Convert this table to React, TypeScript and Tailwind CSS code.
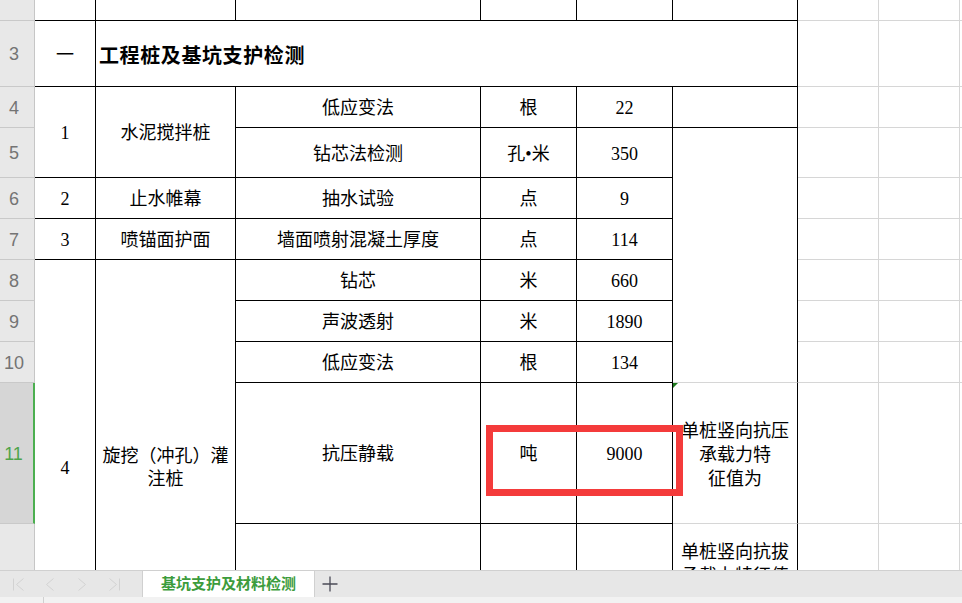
import React from "react";

// spreadsheet cell styles: every cell draws its own right + bottom edge
const cell = "p-0 px-1 pt-[3px] border-r border-b border-black text-center align-middle";
const grid = "p-0 border-r border-b border-[#d6d6d6]";

const COLS = [35, 61, 140, 245, 96, 96, 125, 81, 81, 81];

function RowHead({ n, active }: { n?: number; active?: boolean }) {
  return (
    <td
      className={`p-0 pr-[6px] pt-[2px] text-center align-middle font-['Liberation_Sans',sans-serif] text-[18px] border-b border-b-[#c9c9c9] ${
        active
          ? "bg-[#d6d6d6] text-[#4ea44a] border-r-2 border-r-[#4caf50]"
          : "bg-[#e8e8e8] text-[#747474] border-r border-r-[#c6c6c6]"
      }`}
    >
      {n}
    </td>
  );
}

function Blanks() {
  return (
    <>
      <td className={grid} />
      <td className={grid} />
      <td className={grid} />
    </>
  );
}

function SheetTabs() {
  return (
    <>
      <div className="h-[27px] flex bg-[#e7e7e7] border-t border-[#d0d0d0]">
        <div className="w-[142px] flex items-center pl-[2px]">
          <button className="w-[32px] flex justify-center">
            <svg width="13" height="13" viewBox="0 0 13 13" fill="none" stroke="#d2d2d2" strokeWidth="1">
              <path d="M1.5 0.5v12M11.5 0.5L4.5 6.5l7 6" />
            </svg>
          </button>
          <button className="w-[32px] flex justify-center">
            <svg width="12" height="13" viewBox="0 0 12 13" fill="none" stroke="#d2d2d2" strokeWidth="1">
              <path d="M9.5 0.5L2.5 6.5l7 6" />
            </svg>
          </button>
          <button className="w-[32px] flex justify-center">
            <svg width="12" height="13" viewBox="0 0 12 13" fill="none" stroke="#d2d2d2" strokeWidth="1">
              <path d="M2.5 0.5l7 6-7 6" />
            </svg>
          </button>
          <button className="w-[32px] flex justify-center">
            <svg width="13" height="13" viewBox="0 0 13 13" fill="none" stroke="#d2d2d2" strokeWidth="1">
              <path d="M1.5 0.5l7 6-7 6M11.5 0.5v12" />
            </svg>
          </button>
        </div>
        <div className="w-[173px] bg-white border-x border-[#d0d0d0] flex items-center justify-center text-[15px] font-bold text-[#3c9c3c]">
          基坑支护及材料检测
        </div>
        <button className="ml-[7px] flex items-center">
          <svg width="16" height="16" viewBox="0 0 16 16" fill="none" stroke="#4b4b57" strokeWidth="1.3">
            <path d="M8 0.5v15M0.5 8h15" />
          </svg>
        </button>
      </div>
      <div className="h-[6px] bg-[#f2f2f2] flex">
        <div className="w-[44px] border-r border-[#d0d0d0]" />
      </div>
    </>
  );
}

export default function App() {
  return (
    <div className="relative w-[962px] h-[603px] flex flex-col bg-white overflow-hidden font-['Liberation_Serif','Noto_Sans_CJK_SC',serif] text-black">
      <div className="h-[570px] overflow-hidden">
        <table className="table-fixed border-separate border-spacing-0 w-[1041px] text-[18px] leading-[23px]">
          <colgroup>
            {COLS.map((w, i) => (
              <col key={i} style={{ width: w }} />
            ))}
          </colgroup>
          <tbody>
            <tr className="h-[21px]">
              <RowHead />
              <td className={cell} />
              <td className={cell} />
              <td className={cell} />
              <td className={cell} />
              <td className={cell} />
              <td className={cell} />
              <Blanks />
            </tr>
            <tr className="h-[66px]">
              <RowHead n={3} />
              <td className={cell}>一</td>
              <td colSpan={5} className="p-0 pl-[3px] pt-[2px] border-r border-b border-black align-middle text-left font-['Noto_Sans_CJK_SC',sans-serif] font-bold text-[20px] tracking-[0.6px]">
                工程桩及基坑支护检测
              </td>
              <Blanks />
            </tr>
            <tr className="h-[41px]">
              <RowHead n={4} />
              <td rowSpan={2} className={cell}>1</td>
              <td rowSpan={2} className={cell}>水泥搅拌桩</td>
              <td className={cell}>低应变法</td>
              <td className={cell}>根</td>
              <td className={cell}>22</td>
              <td className={cell} />
              <Blanks />
            </tr>
            <tr className="h-[50px]">
              <RowHead n={5} />
              <td className={cell}>钻芯法检测</td>
              <td className={cell}>孔•米</td>
              <td className={cell}>350</td>
              <td rowSpan={6} className="p-0 border-r border-r-black border-b border-b-[#d6d6d6]" />
              <Blanks />
            </tr>
            <tr className="h-[41px]">
              <RowHead n={6} />
              <td className={cell}>2</td>
              <td className={cell}>止水帷幕</td>
              <td className={cell}>抽水试验</td>
              <td className={cell}>点</td>
              <td className={cell}>9</td>
              <Blanks />
            </tr>
            <tr className="h-[41px]">
              <RowHead n={7} />
              <td className={cell}>3</td>
              <td className={cell}>喷锚面护面</td>
              <td className={cell}>墙面喷射混凝土厚度</td>
              <td className={cell}>点</td>
              <td className={cell}>114</td>
              <Blanks />
            </tr>
            <tr className="h-[41px]">
              <RowHead n={8} />
              <td rowSpan={5} className={cell}>4</td>
              <td rowSpan={5} className={cell}>旋挖（冲孔）灌注桩</td>
              <td className={cell}>钻芯</td>
              <td className={cell}>米</td>
              <td className={cell}>660</td>
              <Blanks />
            </tr>
            <tr className="h-[41px]">
              <RowHead n={9} />
              <td className={cell}>声波透射</td>
              <td className={cell}>米</td>
              <td className={cell}>1890</td>
              <Blanks />
            </tr>
            <tr className="h-[41px]">
              <RowHead n={10} />
              <td className={cell}>低应变法</td>
              <td className={cell}>根</td>
              <td className={cell}>134</td>
              <Blanks />
            </tr>
            <tr className="h-[141px]">
              <RowHead n={11} active />
              <td className={cell}>抗压静载</td>
              <td className={cell}>吨</td>
              <td className={cell}>9000</td>
              <td className="relative p-0 pt-[3px] border-r border-r-black border-b border-b-[#d6d6d6] text-center align-middle leading-[24px]">
                {/* error indicator */}
                <span className="absolute top-0 left-0 w-0 h-0 border-t-[5px] border-r-[5px] border-t-[#1d7a1d] border-r-transparent" />
                单桩竖向抗压
                <br />
                承载力特
                <br />
                征值为
              </td>
              <Blanks />
            </tr>
            <tr className="h-[150px]">
              <RowHead />
              <td className={cell} />
              <td className={cell} />
              <td className={cell} />
              <td className="p-0 pt-[16px] border-r border-r-black border-b border-b-[#d6d6d6] text-center align-top leading-[24px]">
                单桩竖向抗拔
                <br />
                承载力特征值
                <br />
                为
              </td>
              <Blanks />
            </tr>
          </tbody>
        </table>
      </div>

      <SheetTabs />

      {/* red highlight drawn over the sheet */}
      <div className="absolute left-[486px] top-[425px] w-[197px] h-[71px] border-[7px] border-[#f43b3b]" />
    </div>
  );
}
